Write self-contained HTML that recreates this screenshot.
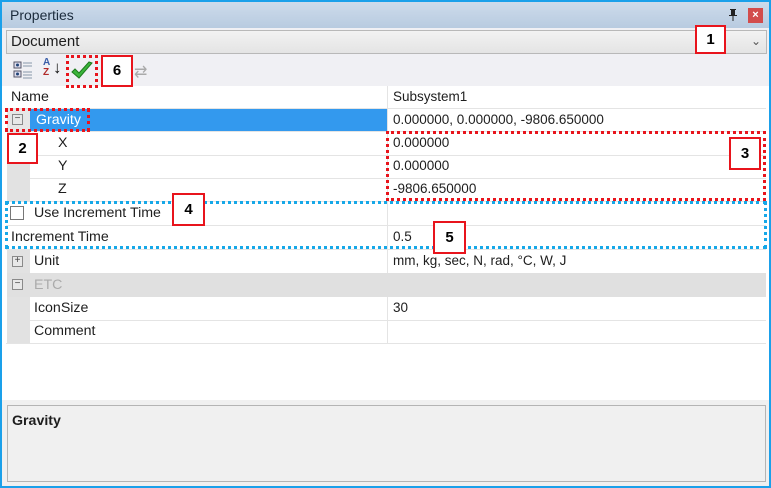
<!DOCTYPE html>
<html><head><meta charset="utf-8"><style>
*{margin:0;padding:0;box-sizing:border-box}
body{width:771px;height:488px;overflow:hidden;background:#fff;font-family:"Liberation Sans",sans-serif;font-size:13.5px;color:#1e1e1e;position:relative}
.a{position:absolute}
.t{position:absolute;line-height:22px;white-space:nowrap}
.n{font-size:14.2px}
.hl{position:absolute;height:1px;background:#e4e4e4}
.box{position:absolute;border:2px solid #e8141c;background:#fff;font-weight:bold;font-size:15px;text-align:center;color:#000}
.rd{position:absolute;border:3px dotted #e8141c}
.bd{position:absolute;border:3px dotted #16a8e8}
.pm{position:absolute;width:11px;height:11px;border:1px solid #8a8a8a;background:#e8e8e8;font-size:10px;line-height:8px;text-align:center;color:#444}
</style></head><body>
<div class="a" style="left:0;top:0;width:771px;height:488px;border:2px solid #1aa0ea"></div>
<div class="a" style="left:2px;top:2px;width:767px;height:26px;background:linear-gradient(#cddbeb,#b8cbe0)"></div>
<div class="t" style="left:10px;top:5px;font-size:14px;line-height:20px;color:#1b2b3c">Properties</div>
<svg class="a" style="left:727px;top:8px" width="12" height="14" viewBox="0 0 12 14"><path d="M3 1h6v1H8v5h2v1H2V7h2V2H3z M5.5 8v5h1V8z" fill="#222"/></svg>
<div class="a" style="left:748px;top:8px;width:15px;height:15px;background:#d24c4c;color:#fff;font-size:11px;line-height:15px;text-align:center;font-weight:bold">×</div>
<div class="a" style="left:2px;top:28px;width:767px;height:58px;background:#f0f0f4"></div>
<div class="a" style="left:6px;top:30px;width:761px;height:24px;border:1px solid #b8b8b8;background:linear-gradient(#f2f2f2,#e4e4e4)"></div>
<div class="t" style="left:11px;top:31px;font-size:15px">Document</div>
<div class="a" style="left:751px;top:34px;font-size:12px;color:#555">&#8964;</div>
<svg class="a" style="left:12px;top:60px" width="24" height="20" viewBox="0 0 24 20">
<rect x="2" y="2" width="7" height="6" fill="#dde" stroke="#556"/><circle cx="5.5" cy="5" r="1.5" fill="#247"/>
<rect x="2" y="11" width="7" height="6" fill="#dde" stroke="#556"/><circle cx="5.5" cy="14" r="1.5" fill="#247"/>
<g stroke="#8899aa"><line x1="11" y1="3" x2="20" y2="3"/><line x1="11" y1="6" x2="20" y2="6"/><line x1="11" y1="12" x2="20" y2="12"/><line x1="11" y1="15" x2="20" y2="15"/><line x1="11" y1="18" x2="20" y2="18"/></g></svg>
<div class="a" style="left:43px;top:58px;font-size:10px;font-weight:bold;color:#3a5ea8;line-height:10px">A<br><span style="color:#b02a2a">Z</span></div>
<div class="a" style="left:53px;top:58px;font-size:17px;color:#111">&#8595;</div>
<svg class="a" style="left:70px;top:60px" width="24" height="22" viewBox="0 0 24 22"><path d="M2 12 L9 18 L22 3 L19 2 L9 13 L5 9 Z" fill="#3bb53b" stroke="#1e7a1e" stroke-width="1"/></svg>
<div class="a" style="left:134px;top:62px;font-size:16px;color:#aaa">&#8644;</div>
<div class="a" style="left:2px;top:86px;width:767px;height:314px;background:#fff"></div>
<div class="a" style="left:387px;top:86px;width:1px;height:258px;background:#e4e4e4"></div>
<div class="t n" style="left:11px;top:86px">Name</div>
<div class="t" style="left:393px;top:86px">Subsystem1</div>
<div class="hl" style="left:6px;top:108px;width:760px"></div>
<div class="a" style="left:7px;top:109px;width:23px;height:22px;background:#e6e6e6"></div>
<div class="a" style="left:30px;top:109px;width:357px;height:22px;background:#3399ee"></div>
<div class="pm" style="left:12px;top:114px">−</div>
<div class="t n" style="left:36px;top:109px;color:#fff">Gravity</div>
<div class="t" style="left:393px;top:109px">0.000000, 0.000000, -9806.650000</div>
<div class="a" style="left:7px;top:131px;width:23px;height:70px;background:#e2e2e2"></div>
<div class="hl" style="left:30px;top:131px;width:736px"></div>
<div class="t n" style="left:58px;top:132px">X</div><div class="t" style="left:393px;top:132px">0.000000</div>
<div class="hl" style="left:30px;top:155px;width:736px"></div>
<div class="t n" style="left:58px;top:155px">Y</div><div class="t" style="left:393px;top:155px">0.000000</div>
<div class="hl" style="left:30px;top:178px;width:736px"></div>
<div class="t n" style="left:58px;top:178px">Z</div><div class="t" style="left:393px;top:178px">-9806.650000</div>
<div class="hl" style="left:6px;top:201px;width:760px"></div>
<div class="a" style="left:10px;top:206px;width:14px;height:14px;border:1px solid #777;background:#fff"></div>
<div class="t n" style="left:34px;top:202px">Use Increment Time</div>
<div class="hl" style="left:6px;top:225px;width:760px"></div>
<div class="t n" style="left:11px;top:226px">Increment Time</div><div class="t" style="left:393px;top:226px">0.5</div>
<div class="hl" style="left:6px;top:249px;width:760px"></div>
<div class="a" style="left:7px;top:250px;width:23px;height:23px;background:#e2e2e2"></div>
<div class="pm" style="left:12px;top:256px">+</div>
<div class="t n" style="left:34px;top:250px">Unit</div><div class="t" style="left:393px;top:250px">mm, kg, sec, N, rad, °C, W, J</div>
<div class="a" style="left:7px;top:273px;width:759px;height:24px;background:#e0e0e0"></div>
<div class="pm" style="left:12px;top:279px">−</div>
<div class="t n" style="left:34px;top:274px;color:#aaa">ETC</div>
<div class="a" style="left:7px;top:297px;width:23px;height:46px;background:#e2e2e2"></div>
<div class="t n" style="left:34px;top:297px">IconSize</div><div class="t" style="left:393px;top:297px">30</div>
<div class="hl" style="left:30px;top:320px;width:736px"></div>
<div class="t n" style="left:34px;top:320px">Comment</div>
<div class="hl" style="left:6px;top:343px;width:760px"></div>
<div class="a" style="left:2px;top:400px;width:767px;height:86px;background:#f0f0f0"></div>
<div class="a" style="left:7px;top:405px;width:759px;height:77px;border:1px solid #b4b4b4;background:#f0f0f0"></div>
<div class="t n" style="left:12px;top:410px;font-weight:bold">Gravity</div>
<div class="rd" style="left:66px;top:55px;width:32px;height:33px"></div>
<div class="rd" style="left:5px;top:108px;width:85px;height:24px"></div>
<div class="rd" style="left:386px;top:131px;width:380px;height:70px"></div>
<div class="bd" style="left:5px;top:201px;width:762px;height:48px"></div>
<div class="box" style="left:695px;top:25px;width:31px;height:29px;line-height:25px">1</div>
<div class="box" style="left:101px;top:55px;width:32px;height:32px;line-height:28px">6</div>
<div class="box" style="left:7px;top:133px;width:31px;height:31px;line-height:27px">2</div>
<div class="box" style="left:729px;top:137px;width:32px;height:33px;line-height:29px">3</div>
<div class="box" style="left:172px;top:193px;width:33px;height:33px;line-height:29px">4</div>
<div class="box" style="left:433px;top:221px;width:33px;height:33px;line-height:29px">5</div>
</body></html>
